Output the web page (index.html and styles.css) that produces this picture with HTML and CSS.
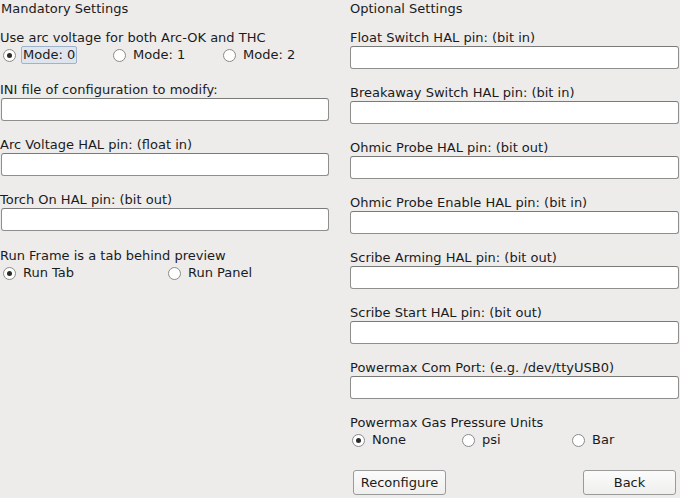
FILE: index.html
```html
<!DOCTYPE html>
<html>
<head>
<meta charset="utf-8">
<link rel="stylesheet" href="styles.css">
</head>
<body>
<div class="page">
  <div class="col">
    <div class="title">Mandatory Settings</div>
    <div class="label first">Use arc voltage for both Arc-OK and THC</div>
    <div class="radios three">
      <div class="opt"><span class="radio on"></span><span class="txt focus">Mode: 0</span></div>
      <div class="opt"><span class="radio"></span><span class="txt">Mode: 1</span></div>
      <div class="opt"><span class="radio"></span><span class="txt">Mode: 2</span></div>
    </div>
    <div class="group gap17">
      <div class="label">INI file of configuration to modify:</div>
      <div class="entry"></div>
    </div>
    <div class="group">
      <div class="label">Arc Voltage HAL pin: (float in)</div>
      <div class="entry"></div>
    </div>
    <div class="group">
      <div class="label">Torch On HAL pin: (bit out)</div>
      <div class="entry"></div>
    </div>
    <div class="group gap16">
      <div class="label">Run Frame is a tab behind preview</div>
      <div class="radios two">
        <div class="opt"><span class="radio on"></span><span class="txt">Run Tab</span></div>
        <div class="opt"><span class="radio"></span><span class="txt">Run Panel</span></div>
      </div>
    </div>
  </div>
  <div class="col right">
    <div class="title">Optional Settings</div>
    <div class="group first">
      <div class="label">Float Switch HAL pin: (bit in)</div>
      <div class="entry"></div>
    </div>
    <div class="group">
      <div class="label">Breakaway Switch HAL pin: (bit in)</div>
      <div class="entry"></div>
    </div>
    <div class="group">
      <div class="label">Ohmic Probe HAL pin: (bit out)</div>
      <div class="entry"></div>
    </div>
    <div class="group">
      <div class="label">Ohmic Probe Enable HAL pin: (bit in)</div>
      <div class="entry"></div>
    </div>
    <div class="group">
      <div class="label">Scribe Arming HAL pin: (bit out)</div>
      <div class="entry"></div>
    </div>
    <div class="group">
      <div class="label">Scribe Start HAL pin: (bit out)</div>
      <div class="entry"></div>
    </div>
    <div class="group">
      <div class="label">Powermax Com Port: (e.g. /dev/ttyUSB0)</div>
      <div class="entry"></div>
    </div>
    <div class="group">
      <div class="label">Powermax Gas Pressure Units</div>
      <div class="radios three">
        <div class="opt"><span class="radio on"></span><span class="txt">None</span></div>
        <div class="opt"><span class="radio"></span><span class="txt">psi</span></div>
        <div class="opt"><span class="radio"></span><span class="txt">Bar</span></div>
      </div>
    </div>
    <div class="buttons">
      <div class="btn">Reconfigure</div>
      <div class="btn">Back</div>
    </div>
  </div>
</div>
</body>
</html>
```

FILE: styles.css
```css
html, body {
  margin: 0;
  padding: 0;
  background: #edeceb;
}
body {
  font-family: "DejaVu Sans", sans-serif;
  font-size: 13px;
  color: #1b1b1b;
  width: 680px;
  height: 498px;
  overflow: hidden;
}
.page {
  display: grid;
  grid-template-columns: 330px 330px;
  column-gap: 20px;
}
.col {
  display: flex;
  flex-direction: column;
}
.title {
  height: 17px;
  line-height: 17px;
  padding-left: 1px;
}
.right .title {
  padding-left: 0;
}
.label {
  height: 17px;
  line-height: 17px;
  white-space: nowrap;
}
.first {
  margin-top: 12px;
}
.group {
  margin-top: 15px;
  display: flex;
  flex-direction: column;
}
.group.first {
  margin-top: 12px;
}
.gap17 { margin-top: 17px; }
.gap16 { margin-top: 16px; }
.entry {
  height: 21px;
  background: #ffffff;
  border: 1px solid #8e8e8c;
  border-top-color: #7a7a78;
  border-radius: 3px;
  margin-left: 1px;
  margin-right: 1px;
}
.right .entry {
  margin-left: 0;
}
.radios {
  display: grid;
  height: 18px;
  align-items: center;
}
.radios.three { grid-template-columns: 110px 110px 110px; }
.radios.two { grid-template-columns: 165px 165px; }
.opt {
  display: flex;
  align-items: center;
  height: 18px;
}
.radio {
  box-sizing: border-box;
  width: 13px;
  height: 13px;
  border: 1px solid #8a8a88;
  border-radius: 50%;
  background: #ffffff;
  margin-left: 3px;
  margin-right: 5px;
  position: relative;
  flex: none;
}
.right .radio {
  margin-left: 2px;
}
.radio.on::after {
  content: "";
  position: absolute;
  left: 3px;
  top: 3px;
  width: 5px;
  height: 5px;
  border-radius: 50%;
  background: #2b2b2b;
}
.txt {
  line-height: 16px;
  padding: 0 1px;
  border: 1px solid transparent;
}
.txt.focus {
  background: #dfe5ee;
  border-color: #9fb3cc;
  border-radius: 2px;
}
.buttons {
  margin-top: 21px;
  display: flex;
  justify-content: space-between;
  padding-left: 3px;
  padding-right: 4px;
}
.btn {
  box-sizing: border-box;
  width: 93px;
  height: 25px;
  line-height: 23px;
  text-align: center;
  border: 1px solid #9a9a98;
  border-radius: 3px;
  background: linear-gradient(#fbfbfb, #efefee);
}
```
